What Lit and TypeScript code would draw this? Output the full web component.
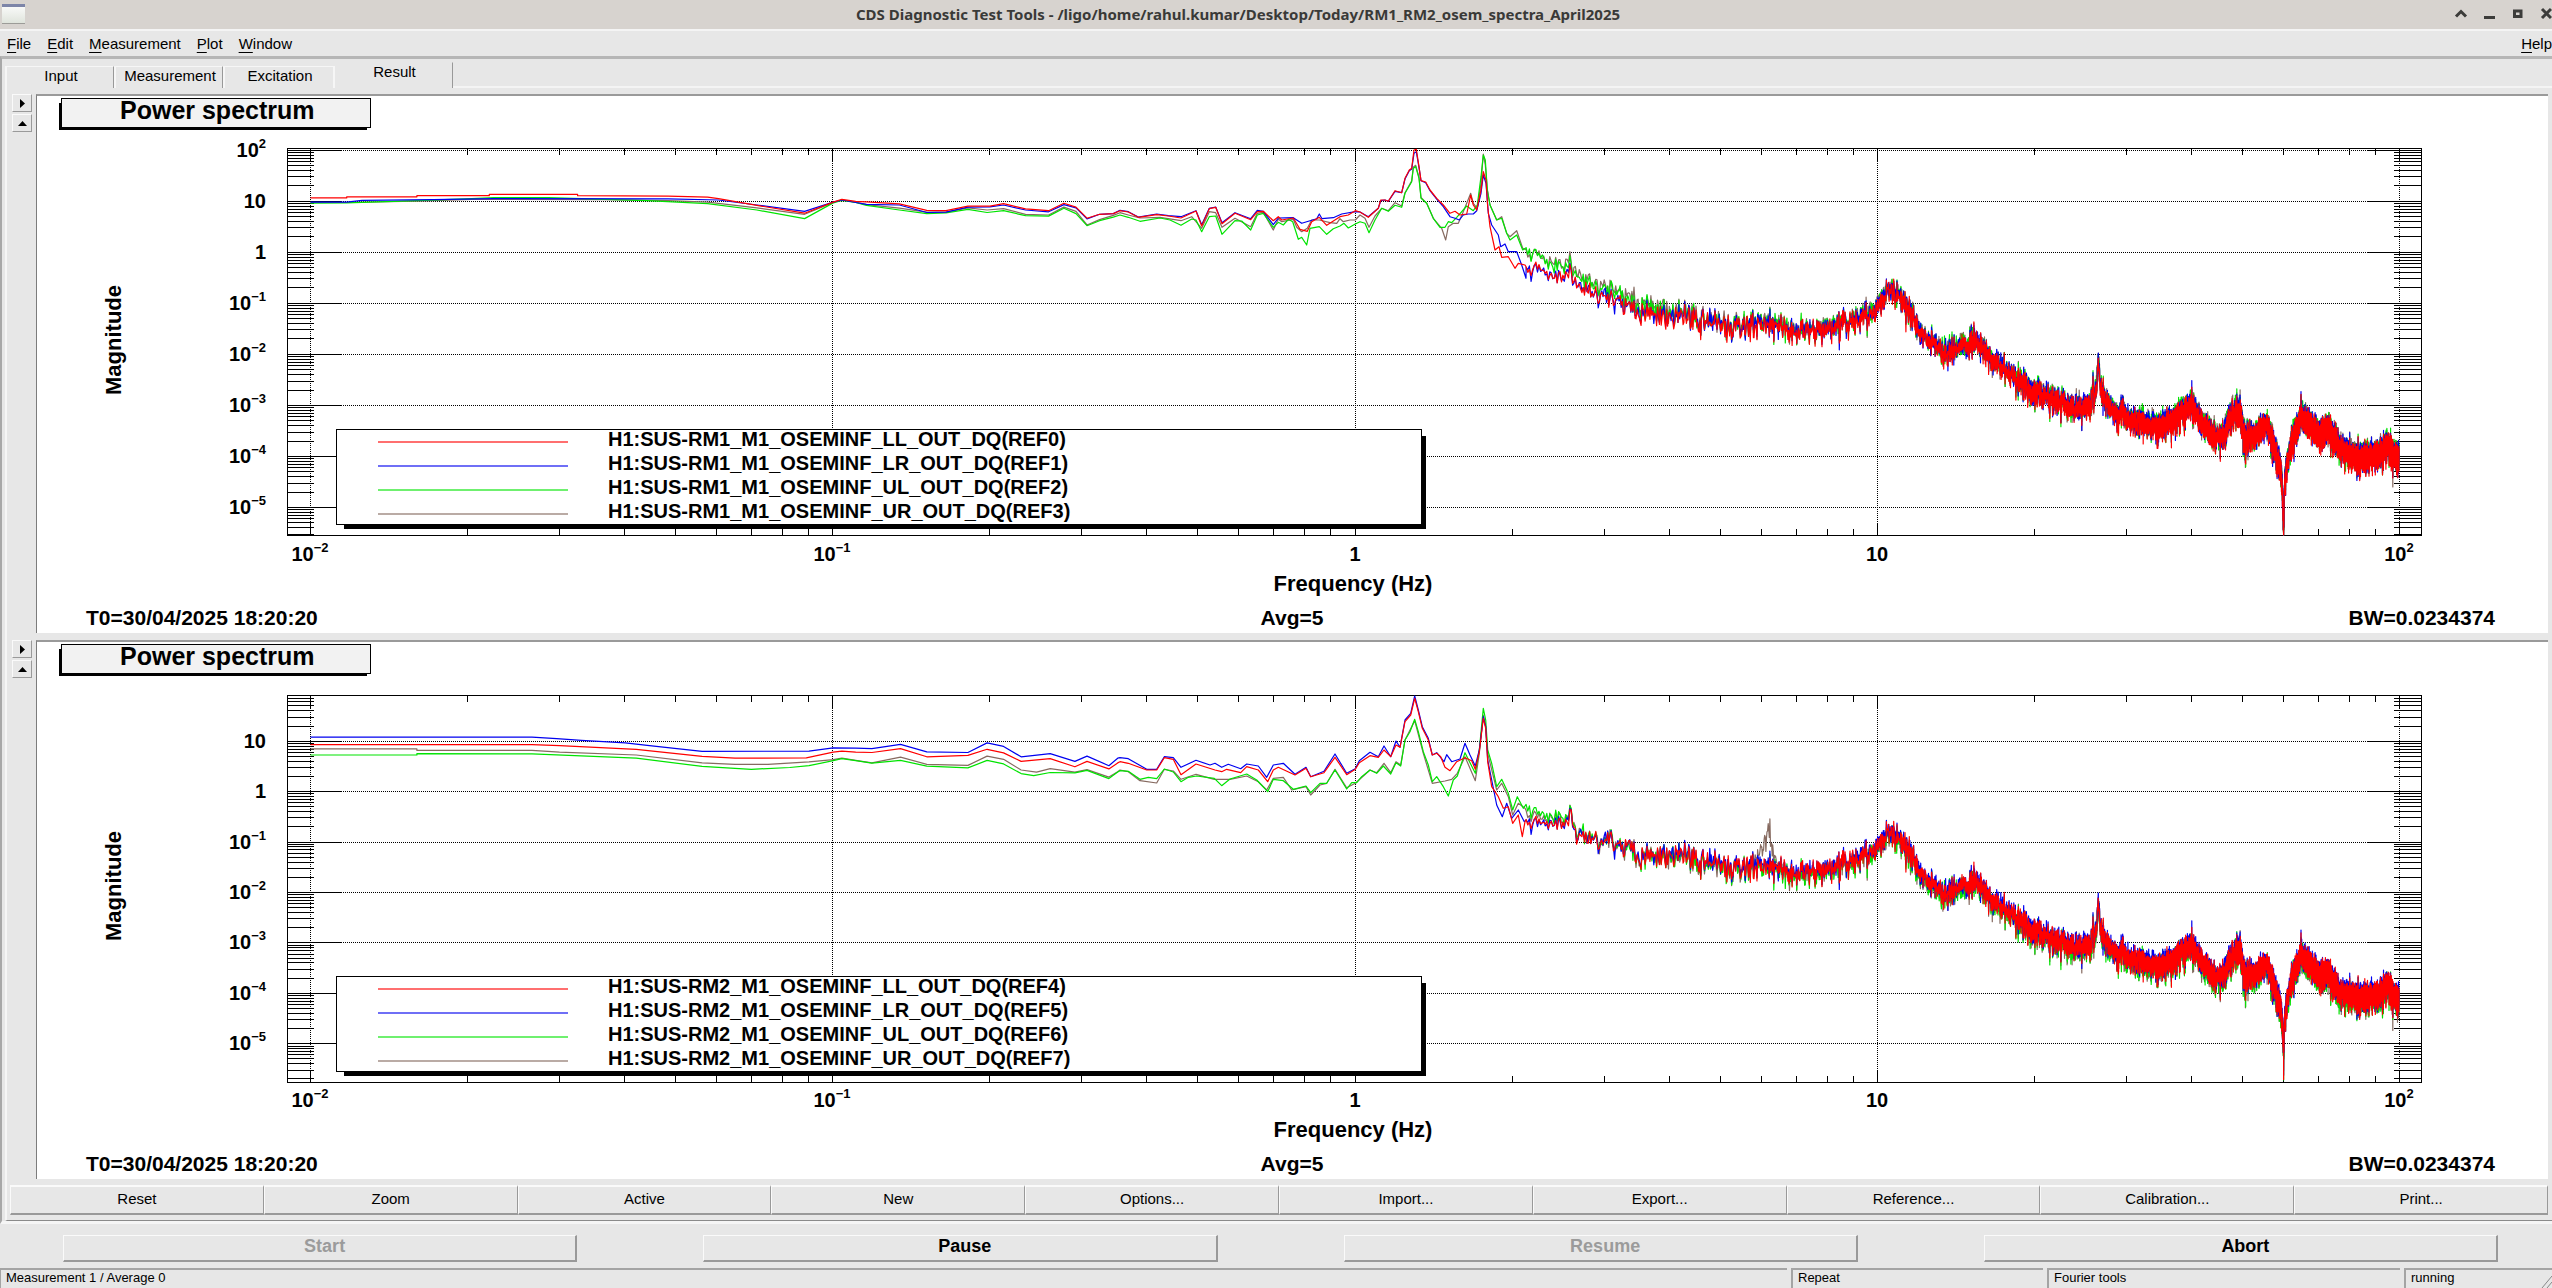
import { LitElement, html, svg, css } from "lit";
import { customElement, property } from "lit/decorators.js";

type Point = [number, number];

/* ---------- plot geometry (units of the plot's viewBox) ---------- */
const VIEW_W = 2511;
const VIEW_H = 537;
const FRAME_L = 250;
const FRAME_R = 2384;
const X_FIRST = 273; // 0.01 Hz
const X_DECADE = 522.3;

/* Each sheet maps a run of digitised points to plot units. */
interface Sheet { ox: number; sx: number; oy: number; sy: number }
const sheets: Record<string, Sheet> = {
  a1: { ox: -37, sx: 0.5485, oy: -96, sy: 0.35714 },
  b1: { ox: 813, sx: 0.5485, oy: -96, sy: 0.35714 },
  c1: { ox: 1083, sx: 0.33333, oy: 44, sy: 0.33333 },
  d1: { ox: 1663, sx: 0.54337, oy: -96, sy: 0.35714 },
  a2: { ox: -37, sx: 0.5485, oy: -102, sy: 0.35714 },
  b2: { ox: 813, sx: 0.5485, oy: -102, sy: 0.35714 },
  c2: { ox: 1083, sx: 0.33333, oy: 48, sy: 0.33333 },
  d2: { ox: 1663, sx: 0.54337, oy: -102, sy: 0.35714 },
};

function read(sheet: string, text: string): Point[] {
  const s = sheets[sheet];
  return text.trim().split(/\s+/).map((pair) => {
    const [x, y] = pair.split(",").map(Number);
    return [s.ox + x * s.sx, s.oy + y * s.sy] as Point;
  });
}

function interpolate(points: Point[], x: number): number {
  if (x <= points[0][0]) return points[0][1];
  for (let i = 1; i < points.length; i++) {
    if (x <= points[i][0]) {
      const [x0, y0] = points[i - 1];
      const [x1, y1] = points[i];
      return x1 === x0 ? y1 : y0 + ((y1 - y0) * (x - x0)) / (x1 - x0);
    }
  }
  return points[points.length - 1][1];
}

function random(seed: number): () => number {
  let a = seed;
  return () => {
    a = (a + 0x6d2b79f5) | 0;
    let t = Math.imul(a ^ (a >>> 15), 1 | a);
    t = (t + Math.imul(t ^ (t >>> 7), 61 | t)) ^ t;
    return ((t ^ (t >>> 14)) >>> 0) / 4294967296;
  };
}

/* log10 of an amplitude averaged over five spectra */
function averagedNoise(next: () => number): number {
  let sum = 0;
  for (let i = 0; i < 5; i++) sum -= Math.log(1 - next());
  return 0.5 * Math.log10(sum / 5);
}

interface Trace {
  name: string;
  color: string;
  low: Point[];
  offset: Point[];
  bump?: boolean;
}
interface Plot {
  top: number;
  bottom: number;
  y10: number;
  decade: number;
  labels: number[];
  legendTop: number;
  seed: number;
  base: Point[];
  traces: Trace[];
}

const RED = "#ff0000";
const BLUE = "#0000f0";
const GREEN = "#00e400";
const BROWN = "#866a60";

const plotOne: Plot = {
  top: 53, bottom: 439, y10: 104.7, decade: 51.05,
  labels: [2, 1, 0, -1, -2, -3, -4, -5], legendTop: 333, seed: 11,
  base: [
    ...read("c1", "1225,380 1255,378 1290,402 1318,412 1350,392 1380,435 1400,448 1450,466 1500,470 1545,502"),
    ...read("d1", `-40,880 0,895 60,915 120,900 165,925 230,920 260,905 300,885 322,870 335,835 352,805
      368,825 385,870 410,940 430,960 455,990 480,968 510,950 525,985 550,1025 580,1055 610,1090 650,1110
      680,1135 705,1140 721,1125 723,1070 725,1115 730,1080 733,1000 736,1080 750,1130 765,1155 776,1150
      778,1125 780,1160 790,1175 830,1190 870,1175 885,1150 905,1130 920,1170 950,1225 965,1210 978,1160
      994,1150 1003,1225 1020,1220 1042,1180 1055,1235 1066,1290 1071,1330 1074,1500 1076,1340 1082,1280
      1095,1210 1106,1155 1118,1178 1138,1215 1155,1195 1175,1245 1200,1278 1250,1270 1264,1238 1275,1270 1287,1275`),
  ],
  traces: [
    {
      name: "H1:SUS-RM1_M1_OSEMINF_LL_OUT_DQ(REF0)", color: RED,
      low: [
        ...read("a1", "566,554 632,554 632,551 760,551 760,548 892,548 892,544 1053,544 1053,548 1218,549 1290,552 1310,556 1380,575 1467,597 1519,566 1535,558 1560,564"),
        ...read("b1", "30,565 90,571 140,589 175,590 215,577 255,577 280,570 320,585 362,590 390,569 412,580 432,611 455,600 480,598"),
        ...read("c1", `0,212 25,216 55,232 110,224 145,228 183,234 228,213 245,258 268,206 287,202 306,251 345,220
          392,239 412,215 430,214 460,242 475,230 485,240 520,234 540,268 562,274 575,245 598,232 620,256 660,230
          685,225 706,212 720,216 745,232 765,214 775,205 782,180 795,180 805,184 825,152 845,158 855,115 868,90
          875,85 882,30 889,28 897,80 903,122 917,126 930,150 950,175 970,195 990,220 1005,214 1020,225 1040,222
          1052,165 1060,195 1070,210 1083,150 1090,95 1098,120 1103,200 1110,260 1125,330 1137,320 1145,352
          1165,350 1185,385 1195,370 1215,375`),
      ],
      offset: [[0, 0]],
    },
    {
      name: "H1:SUS-RM1_M1_OSEMINF_LR_OUT_DQ(REF1)", color: BLUE,
      low: [
        ...read("a1", "566,566 632,566 660,561 790,559 900,556 1218,557 1310,560 1380,574 1467,592 1519,566 1535,560 1560,567"),
        ...read("b1", "30,572 90,574 140,595 175,594 215,580 255,579 280,574 320,588 362,593 390,573 412,582 432,613 455,600 480,598"),
        ...read("c1", `0,211 25,215 55,231 110,222 145,227 183,230 228,212 245,254 268,205 287,201 306,248 345,218
          392,236 412,211 430,214 460,254 475,234 520,233 545,250 590,236 598,222 606,236 640,233 665,222 706,215
          720,216 745,230 765,213 775,205 782,182 795,180 805,184 825,154 845,158 855,117 868,92 875,87 882,40
          889,35 897,82 903,122 917,128 930,152 950,177 970,200 990,230 1005,235 1018,240 1030,225 1045,222
          1060,222 1070,212 1083,160 1090,105 1098,130 1105,220 1115,255 1135,285 1142,320 1155,312 1165,335
          1190,335 1205,375 1218,415`),
      ],
      offset: [[1490, 0], [1600, -1], [2363, -2]],
    },
    {
      name: "H1:SUS-RM1_M1_OSEMINF_UL_OUT_DQ(REF2)", color: GREEN,
      low: [
        ...read("a1", "566,569 632,568 760,562 860,556 900,553 1000,553 1060,556 1180,562 1290,570 1380,588 1467,612 1519,568 1535,561 1560,567"),
        ...read("b1", "30,575 90,588 140,598 175,596 215,586 250,595 280,590 320,604 362,605 390,583 412,598 432,632 455,618 480,608"),
        ...read("c1", `0,225 25,232 60,244 120,234 150,240 183,256 215,237 228,240 245,275 268,230 287,228 306,283
          345,242 365,243 392,270 412,225 430,220 460,262 475,247 490,255 505,238 518,245 535,298 545,292 560,315
          570,265 598,260 620,283 640,266 660,258 672,250 685,264 706,252 720,245 735,250 747,278 765,240 785,205
          805,214 825,196 845,202 855,160 875,125 880,85 887,80 897,115 903,175 920,190 940,235 960,262 975,262
          985,245 995,248 1010,232 1040,198 1060,212 1072,195 1083,110 1090,45 1096,60 1102,150 1110,195 1130,240
          1145,235 1160,280 1170,300 1190,285 1208,330`),
      ],
      offset: [[1490, -16], [1525, -9], [1600, -7], [1665, -2], [2363, -2]],
    },
    {
      name: "H1:SUS-RM1_M1_OSEMINF_UR_OUT_DQ(REF3)", color: BROWN,
      low: [
        ...read("a1", "566,567 632,567 760,563 860,558 1100,559 1218,562 1290,566 1380,582 1467,600 1519,567 1535,560 1560,566"),
        ...read("b1", "30,573 90,583 140,594 175,594 215,582 250,588 280,584 320,600 362,602 390,580 412,592 432,630 455,615 480,603"),
        ...read("c1", `0,218 25,225 60,234 120,232 183,242 215,230 245,265 268,215 287,218 306,262 345,235 392,260
          412,220 430,217 460,270 475,237 485,245 520,238 530,262 545,275 562,265 575,240 598,240 630,248 650,250
          660,236 670,245 690,240 706,240 720,225 735,235 747,262 765,228 785,205 805,212 825,188 845,198 855,158
          875,122 880,82 887,76 897,112 903,172 920,190 940,235 965,265 977,300 985,260 1000,250 1015,250 1030,215
          1052,160 1060,190 1072,205 1083,130 1090,42 1096,75 1102,148 1110,195 1130,240 1145,230 1160,280
          1170,290 1190,272 1208,325`),
      ],
      offset: [[1490, -16], [1525, -12], [1600, -10], [1665, -3], [2363, -2]],
    },
  ],
};

const plotTwo: Plot = {
  top: 54, bottom: 440, y10: 98.7, decade: 50.42,
  labels: [1, 0, -1, -2, -3, -4, -5], legendTop: 334, seed: 11,
  base: [
    ...read("c2", "1225,388 1275,395 1320,400 1345,390 1355,362 1370,440 1388,418 1400,455 1420,435 1450,462 1466,425 1480,455 1530,455 1550,488"),
    ...read("d2", `-50,870 0,895 60,915 120,905 165,930 230,920 260,905 300,880 322,865 335,835 352,812 368,830
      385,870 410,940 430,965 455,990 480,967 510,950 525,985 550,1025 580,1050 610,1085 650,1110 680,1130
      705,1135 721,1125 723,1070 725,1115 730,1080 733,1000 736,1080 750,1130 765,1150 776,1150 778,1120
      780,1158 790,1170 830,1185 870,1175 885,1145 905,1130 920,1165 950,1225 965,1205 978,1165 994,1140
      1003,1215 1020,1215 1042,1178 1055,1230 1066,1285 1071,1320 1074,1440 1076,1330 1082,1270 1095,1200
      1106,1150 1118,1175 1138,1215 1155,1205 1175,1260 1200,1275 1250,1270 1264,1235 1275,1270 1287,1278`),
  ],
  traces: [
    {
      name: "H1:SUS-RM2_M1_OSEMINF_LL_OUT_DQ(REF4)", color: RED,
      low: [
        ...read("a2", "566,573 970,573 1020,576 1160,586 1280,606 1340,611 1470,610 1519,594 1535,591 1560,594"),
        ...read("b2", "40,595 92,584 140,607 215,603 250,586 280,596 312,620 365,612 410,635 432,620 472,641 488,624"),
        ...read("c2", `0,215 25,220 80,240 110,240 133,203 160,208 183,254 228,222 285,240 305,245 320,238 362,248
          380,230 415,240 443,275 460,240 475,232 525,255 558,235 572,260 612,248 645,202 680,254 706,238 718,218
          750,197 775,202 792,180 812,200 828,165 840,172 855,95 872,75 884,25 895,65 907,115 925,150 937,195
          950,190 962,200 975,232 990,242 1010,215 1035,203 1055,212 1066,238 1078,185 1090,85 1097,115 1103,215
          1115,290 1135,320 1150,355 1165,350 1178,400 1195,375 1207,440 1215,395`),
      ],
      offset: [[0, 0]],
    },
    {
      name: "H1:SUS-RM2_M1_OSEMINF_LR_OUT_DQ(REF5)", color: BLUE,
      low: [
        ...read("a2", "566,552 970,552 1015,556 1060,561 1140,568 1180,575 1280,592 1475,591 1519,582 1560,583"),
        ...read("b2", "40,584 92,572 140,593 215,595 250,568 280,578 312,607 365,598 410,620 432,605 472,632 488,611"),
        ...read("c2", `0,203 25,206 80,238 110,238 133,200 160,203 183,232 228,211 270,225 285,220 305,232 325,223
          362,236 380,222 415,228 440,262 460,225 490,220 525,253 558,232 572,260 612,244 645,192 680,250 706,236
          718,212 750,187 775,200 792,168 812,200 828,153 840,172 855,90 872,70 884,18 895,60 907,110 925,145
          937,195 950,188 972,215 980,194 995,215 1020,207 1035,160 1050,195 1066,228 1078,180 1090,80 1097,110
          1103,210 1115,270 1130,345 1147,380 1160,340 1175,385 1195,360 1213,395`),
      ],
      offset: [[1490, 0], [1600, -1], [2363, -2]],
    },
    {
      name: "H1:SUS-RM2_M1_OSEMINF_UL_OUT_DQ(REF6)", color: GREEN,
      low: [
        ...read("a2", "566,602 760,602 760,598 970,599 1160,611 1280,634 1370,642 1440,637 1475,632 1519,618 1535,612 1560,618"),
        ...read("b2", "40,625 92,617 140,633 215,638 250,617 280,627 312,654 335,660 365,651 410,652 432,645 472,668 488,650"),
        ...read("c2", `0,242 25,244 60,268 85,262 110,266 133,237 160,246 183,275 205,262 230,258 283,265 305,287
          330,267 380,252 410,270 443,305 460,268 490,272 520,298 558,288 572,308 600,280 620,280 645,240 680,297
          695,278 710,278 725,260 750,240 770,250 790,228 812,252 828,218 842,228 855,150 870,125 884,88 895,125
          910,185 925,225 937,275 950,260 970,290 985,318 1000,270 1012,258 1035,188 1066,250 1078,180 1090,55
          1097,90 1103,180 1115,220 1130,290 1145,268 1165,310 1178,360 1192,320 1210,355`),
      ],
      offset: [[1490, -12], [1525, -5], [1570, 0], [1700, 2], [2363, 2]],
    },
    {
      name: "H1:SUS-RM2_M1_OSEMINF_UR_OUT_DQ(REF7)", color: BROWN, bump: true,
      low: [
        ...read("a2", "566,585 760,585 760,589 970,589 1020,594 1160,602 1280,624 1340,628 1400,628 1475,621 1519,615 1535,611 1560,617"),
        ...read("b2", "40,624 92,608 140,628 215,631 250,605 280,614 312,644 340,650 365,640 410,650 432,643 472,664 488,649"),
        ...read("c2", `0,240 25,245 60,272 110,279 133,238 160,243 183,268 228,253 283,268 330,268 380,258 415,275
          440,300 460,265 490,262 515,300 558,290 572,315 600,285 620,280 645,238 680,293 706,280 750,240 770,248
          792,220 812,248 828,215 842,225 855,150 884,92 910,190 937,280 975,273 995,268 1012,250 1035,200
          1066,272 1078,190 1090,75 1097,110 1103,190 1130,300 1145,280 1165,320 1178,375 1195,340 1215,355`),
      ],
      offset: [[1490, -8], [1525, -4], [1570, 0], [1700, 2], [2363, 2]],
    },
  ],
};

/* Resonance seen only by one sensor, near 6 Hz */
const BUMP: Point[] = [[1707, 0], [1720, -10], [1727, -22], [1732, -40], [1736, -18], [1741, 0]];

function tracePath(plot: Plot, trace: Trace, index: number): string {
  const common = random(plot.seed);
  const own = random(100 + index);
  const parts = trace.low.map(([x, y]) => `${x.toFixed(1)} ${y.toFixed(1)}`);
  const step = 0.015625;
  for (let f = 2.13; f <= 100; f += step) {
    const x = X_FIRST + X_DECADE * (Math.log10(f) + 2);
    const shared = averagedNoise(common);
    const single = averagedNoise(own);
    const amount = f < 4 ? 0.8 + ((f - 2) / 2) * 0.6 : 1.4;
    let y = interpolate(plot.base, x) + interpolate(trace.offset, x);
    if (trace.bump) y += interpolate(BUMP, x);
    y -= plot.decade * amount * (0.85 * shared + 0.4 * single);
    parts.push(`${x.toFixed(1)} ${Math.min(y, plot.bottom).toFixed(1)}`);
  }
  return "M" + parts.join("L");
}

@customElement("spectrum-plot")
export class SpectrumPlot extends LitElement {
  @property({ attribute: false }) plot!: Plot;

  static styles = css`
    :host { display: block; min-width: 0; min-height: 0; background: #fff; }
    .canvas { display: block; width: 100%; height: 100%; font-family: "Liberation Sans", Arial, sans-serif; font-weight: bold; fill: #000; }
    .title { font-size: 25px; }
    .axis { font-size: 22px; }
    .foot { font-size: 21px; }
    .tick, .key { font-size: 20px; }
    .exp { font-size: 13px; }
    .line { fill: none; stroke: #000; stroke-width: 1; shape-rendering: crispEdges; }
    .grid { fill: none; stroke: #000; stroke-width: 1; stroke-dasharray: 1 1; shape-rendering: crispEdges; }
    .trace { fill: none; stroke-width: 1.2; stroke-linejoin: round; }
    .sample { stroke-width: 1.4; opacity: 0.75; }
    .box { fill: #fff; stroke: #000; stroke-width: 1; shape-rendering: crispEdges; }
    .pale { fill: #f2f2f2; }
    .shadow { fill: #000; }
  `;

  private label(power: number, x: number, y: number, anchor: string) {
    if (power === 0 || power === 1) {
      return svg`<text class="tick" x=${x} y=${y} text-anchor=${anchor}>${power ? "10" : "1"}</text>`;
    }
    const exp = power < 0 ? `\u2212${-power}` : `${power}`;
    return svg`<text class="tick" x=${x} y=${y} text-anchor=${anchor}>10<tspan class="exp" dy="-9">${exp}</tspan></text>`;
  }

  private axes() {
    const p = this.plot;
    let grid = "";
    let ticks = "";
    for (let d = 0; d <= 4; d++) {
      const x = Math.round(X_FIRST + d * X_DECADE);
      grid += `M${x}.5 ${p.top}V${p.bottom}`;
      ticks += `M${x}.5 ${p.top}v12M${x}.5 ${p.bottom}v-12`;
      if (d === 4) break;
      for (let n = 2; n < 10; n++) {
        const mx = Math.round(x + X_DECADE * Math.log10(n));
        ticks += `M${mx}.5 ${p.top}v6M${mx}.5 ${p.bottom}v-6`;
      }
    }
    for (let power = -6; power <= 2; power++) {
      for (let n = 1; n < 10; n++) {
        const y = Math.round(p.y10 - p.decade * (power - 1 + Math.log10(n)));
        if (y < p.top - 1 || y > p.bottom) continue;
        const reach = n === 1 ? 54 : 27;
        ticks += `M${FRAME_L} ${y}.5h${reach}M${FRAME_R} ${y}.5h${-reach}`;
        if (n === 1) grid += `M${FRAME_L} ${y}.5H${FRAME_R}`;
      }
    }
    return svg`<path class="grid" d=${grid}></path><path class="line" d=${ticks}></path>
      <rect class="line" x=${FRAME_L + 0.5} y=${p.top - 0.5} width=${FRAME_R - FRAME_L} height=${p.bottom - p.top + 1}></rect>`;
  }

  render() {
    const p = this.plot;
    const paths = p.traces.map((t, i) => svg`<path class="trace" stroke=${t.color} d=${tracePath(p, t, i)}></path>`).reverse();
    const top = p.legendTop;
    return html`
      <svg class="canvas" viewBox="0 0 ${VIEW_W} ${VIEW_H}" role="img" aria-label="Power spectrum">
        <path class="shadow" d="M22 7H330V34H22Z"></path>
        <rect class="box pale" x="24.5" y="2.5" width="309" height="29"></rect>
        <text class="title" x="83" y="23">Power spectrum</text>
        ${this.axes()}
        ${paths}
        <path class="shadow" d="M307 ${top + 7}H1389V${top + 100}H307Z"></path>
        <rect class="box" x="299.5" y=${top + 0.5} width="1085" height="95"></rect>
        ${p.traces.map((t, i) => svg`
          <path class="sample" stroke=${t.color} d="M341 ${top + 13 + i * 24}H531"></path>
          <text class="key" x="571" y=${top + 17 + i * 24}>${t.name}</text>`)}
        ${p.labels.map((power) => this.label(power, 229, Math.round(p.y10 - p.decade * (power - 1)) + 7, "end"))}
        ${[-2, -1, 0, 1, 2].map((power) => this.label(power, Math.round(X_FIRST + (power + 2) * X_DECADE), 465, "middle"))}
        <text class="axis" text-anchor="middle" transform="translate(84 244) rotate(-90)">Magnitude</text>
        <text class="axis" text-anchor="middle" x="1316" y="495">Frequency (Hz)</text>
        <text class="foot" x="49" y="529">T0=30/04/2025 18:20:20</text>
        <text class="foot" text-anchor="middle" x="1255" y="529">Avg=5</text>
        <text class="foot" text-anchor="end" x="2458" y="529">BW=0.0234374</text>
      </svg>`;
  }
}

@customElement("app-root")
export class AppRoot extends LitElement {
  static styles = css`
    :host {
      display: flex; flex-direction: column; height: 100vh; overflow: hidden;
      background: #e7e7e7; color: #000;
      font-family: "Liberation Sans", Arial, sans-serif; font-size: 15px;
    }
    * { box-sizing: border-box; }
    button { font: inherit; color: inherit; margin: 0; padding: 0; border: 0; background: none; }
    .titlebar { flex: none; display: flex; align-items: center; height: 29px; background: #d7d3cf; overflow: hidden; }
    .appicon { width: 30px; height: 24px; }
    .caption { flex: 1; margin: 0; text-align: center; font: 700 15px "Noto Sans", sans-serif; line-height: 26px; padding-bottom: 2px; color: #3a3a38; }
    .winbuttons { display: flex; margin-right: -10px; }
    .winbutton { width: 29px; height: 26px; }
    .glyph { display: block; width: 100%; height: 100%; fill: none; stroke: #3c3c3a; stroke-width: 3; }
    .menubar { flex: none; display: flex; align-items: center; height: 27px; border-top: 2px solid #f4f4f4; overflow: hidden; }
    .menuitem { padding: 0 8px; line-height: 25px; color: #000; text-decoration: none; }
    .menuitem:first-child { padding-left: 7px; }
    .menuitem:last-child { padding-right: 0; margin-left: auto; }
    .key { text-decoration: underline; text-underline-offset: 3px; text-decoration-thickness: 1px; }
    .frame {
      flex: 1; min-height: 0; display: flex; flex-direction: column;
      border-top: 3px solid #b6b6b6; border-left: 2px solid #a8a8a8;
      border-bottom: 3px solid #f5f5f5; padding-top: 3px;
    }
    .tabs { flex: none; display: flex; align-items: flex-end; height: 26px; margin-left: 3px; }
    .tab { height: 22px; width: 109px; padding: 0 0 4px 2px; line-height: 16px; border-left: 2px solid #f6f6f6; border-top: 1px solid #f6f6f6; border-right: 1px solid #999; }
    .tab.wide { width: 112px; border-right: 2px solid #f6f6f6; }
    .tab.active { width: 118px; height: 26px; padding-bottom: 8px; border-left: 0; border-top-color: #e7e7e7; }
    .fill { flex: 1; align-self: flex-end; height: 2px; background: #f4f4f4; }
    .page {
      flex: 1; min-height: 0; display: flex; flex-direction: column; margin-left: 3px;
      border-left: 2px solid #f6f6f6; border-bottom: 1px solid #8a8a8a; padding: 6px 4px 5px 3px;
    }
    .panes { flex: 1; min-height: 0; display: grid; grid-template-rows: 1fr 1fr; gap: 7px; }
    .pane { display: grid; grid-template-columns: 22px 1fr; column-gap: 4px; min-height: 0; }
    .arrows { display: flex; flex-direction: column; gap: 2px; padding-left: 2px; }
    .arrow { width: 20px; height: 18px; border: 1px solid; border-color: #fafafa #9a9a9a #9a9a9a #fafafa; display: grid; place-items: center; }
    .arrow svg { display: block; width: 9px; height: 9px; }
    .plot { border-left: 1px solid #7c7c7c; border-top: 2px solid #9a9a9a; }
    .actions { flex: none; display: grid; grid-template-columns: repeat(10, 1fr); margin-top: 6px; }
    .action, .command { border: 1px solid; border-color: #fafafa #999 #999 #fafafa; border-bottom-width: 2px; }
    .action { height: 30px; border-top-width: 2px; padding-bottom: 4px; }
    .commands { flex: none; display: grid; grid-template-columns: repeat(4, 1fr); gap: 126px; padding: 11px 54px 6px 63px; }
    .command { height: 27px; padding: 0 0 4px 10px; font-size: 18px; font-weight: bold; line-height: 20px; border-right-width: 2px; }
    .command:disabled { color: #9b9b9b; }
    .status { flex: none; display: grid; grid-template-columns: 1fr 252px 353px 148px; gap: 4px; height: 20px; font-size: 13px; line-height: 16px; overflow: hidden; }
    .cell { display: flex; justify-content: space-between; padding-left: 5px; border-top: 2px solid #a4a4a4; border-left: 2px solid #a4a4a4; }
    .cell:first-child { border-left-width: 1px; }
    .grip { width: 12px; height: 18px; stroke: #888; }
  `;

  private arrows() {
    return html`<div class="arrows">
      <button class="arrow" aria-label="Expand options"><svg viewBox="0 0 9 9"><path d="M2 0L7 4.5L2 9Z"></path></svg></button>
      <button class="arrow" aria-label="Enlarge plot"><svg viewBox="0 0 9 9"><path d="M0 7L4.5 2L9 7Z"></path></svg></button>
    </div>`;
  }

  render() {
    const menus = ["File", "Edit", "Measurement", "Plot", "Window", "Help"];
    const actions = ["Reset", "Zoom", "Active", "New", "Options...", "Import...", "Export...", "Reference...", "Calibration...", "Print..."];
    const commands: [string, boolean][] = [["Start", false], ["Pause", true], ["Resume", false], ["Abort", true]];
    return html`
      <header class="titlebar">
        <svg class="appicon" viewBox="0 0 30 24" aria-hidden="true">
          <defs><linearGradient id="sheet" x1="0" y1="0" x2="0" y2="1"><stop offset="0" stop-color="#fdfdfd"></stop><stop offset="1" stop-color="#dfe4dc"></stop></linearGradient></defs>
          <rect x="2" y="1" width="23" height="19" fill="url(#sheet)"></rect>
          <rect x="2" y="1" width="23" height="3" fill="#7d85a8"></rect>
          <rect x="2" y="20" width="23" height="1" fill="#9c9c98"></rect>
        </svg>
        <h1 class="caption">CDS Diagnostic Test Tools - /ligo/home/rahul.kumar/Desktop/Today/RM1_RM2_osem_spectra_April2025</h1>
        <div class="winbuttons">
          <button class="winbutton" aria-label="Shade"><svg class="glyph" viewBox="0 0 29 26"><path d="M10 14.500L15 9.500L20 14.500"></path></svg></button>
          <button class="winbutton" aria-label="Minimize"><svg class="glyph" viewBox="0 0 29 26"><path d="M9 15.500H20"></path></svg></button>
          <button class="winbutton" aria-label="Maximize"><svg class="glyph" viewBox="0 0 29 26"><path d="M10.500 9H17V14.500H10.500Z"></path></svg></button>
          <button class="winbutton" aria-label="Close"><svg class="glyph" viewBox="0 0 29 26"><path d="M9 7L18 16M18 7L9 16"></path></svg></button>
        </div>
      </header>
      <nav class="menubar">
        ${menus.map((m) => html`<a class="menuitem" href="#"><span class="key">${m[0]}</span>${m.slice(1)}</a>`)}
      </nav>
      <main class="frame">
        <div class="tabs" role="tablist">
          <button class="tab" role="tab">Input</button>
          <button class="tab" role="tab">Measurement</button>
          <button class="tab wide" role="tab">Excitation</button>
          <button class="tab active" role="tab" aria-selected="true">Result</button>
          <div class="fill"></div>
        </div>
        <div class="page">
          <div class="panes">
            ${[plotOne, plotTwo].map((plot) => html`<section class="pane">${this.arrows()}<spectrum-plot class="plot" .plot=${plot}></spectrum-plot></section>`)}
          </div>
          <div class="actions">${actions.map((a) => html`<button class="action">${a}</button>`)}</div>
        </div>
      </main>
      <div class="commands">
        ${commands.map(([name, on]) => html`<button class="command" ?disabled=${!on}>${name}</button>`)}
      </div>
      <footer class="status">
        <span class="cell">Measurement 1 / Average 0</span>
        <span class="cell">Repeat</span>
        <span class="cell">Fourier tools</span>
        <span class="cell">running<svg class="grip" viewBox="0 0 12 18" aria-hidden="true"><path d="M2 18L12 6M7 18L12 12"></path></svg></span>
      </footer>`;
  }
}
